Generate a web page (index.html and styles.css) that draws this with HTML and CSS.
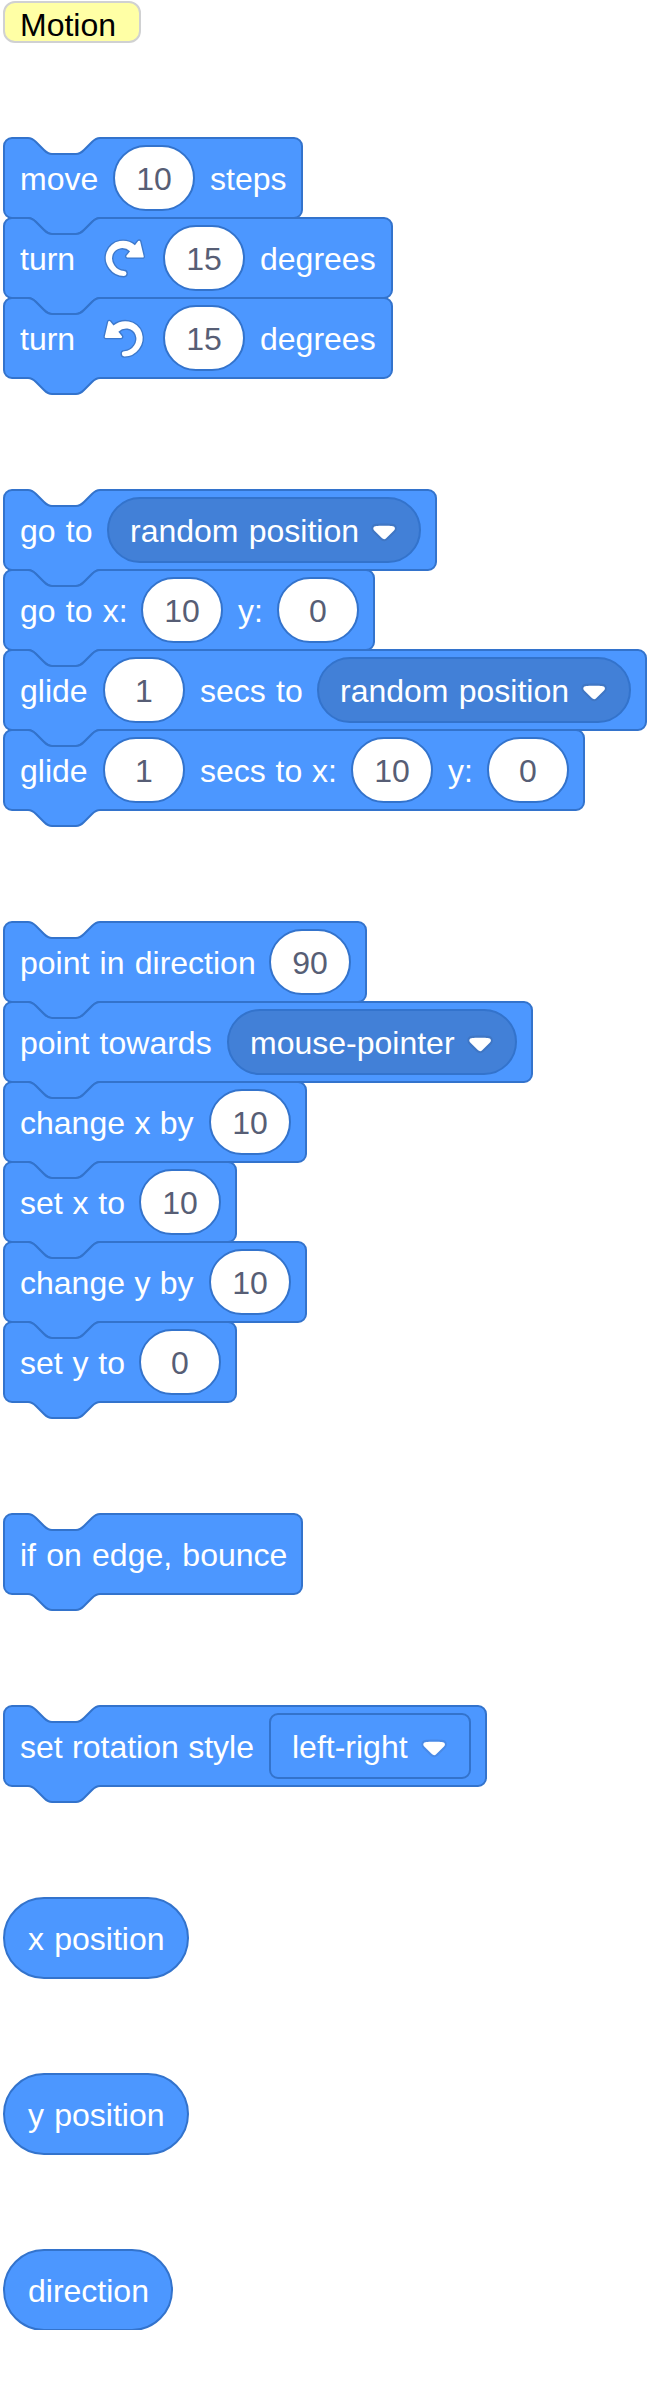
FILE: index.html
```html
<!DOCTYPE html>
<html lang="en">
<head>
<meta charset="utf-8">
<title>Motion blocks</title>
<link rel="stylesheet" href="styles.css">
</head>
<body>
<svg class="defs" aria-hidden="true">
  <symbol id="turn-right" viewBox="0 0 24 24">
    <path transform="translate(.25 .15) scale(.98)" fill="#fff" stroke="#3d79cc" stroke-width="1.4" stroke-linejoin="round" paint-order="stroke" d="M21.38 11.83h-7.61a.59.59 0 0 1-.43-1l1.75-2.19a5.9 5.9 0 0 0-4.7-1.58 5.07 5.07 0 0 0-4.11 3.17A6 6 0 0 0 7 15.77a6.51 6.51 0 0 0 5 2.92 1.31 1.31 0 0 1-.08 2.62 9.3 9.3 0 0 1-7.35-3.82 9.16 9.16 0 0 1-1.4-8.37A8.51 8.51 0 0 1 5.71 5.4a8.76 8.76 0 0 1 4.11-1.92 9.71 9.71 0 0 1 7.75 2.07l1.67-2.1a.59.59 0 0 1 1 .21L22 11.08a.59.59 0 0 1-.62.75z"/>
  </symbol>
  <symbol id="arrow" viewBox="0 0 13.5 9.5">
    <g transform="translate(.2 .3)">
      <path fill="#231f20" opacity=".1" d="M12.71 2.44A2.41 2.41 0 0 1 12 4.16L8.08 8.08a2.45 2.45 0 0 1-3.45 0L.72 4.16A2.42 2.42 0 0 1 0 2.44 2.48 2.48 0 0 1 .71.71C1 .47 1.43 0 6.36 0S11.75.46 12 .71a2.44 2.44 0 0 1 .71 1.73z"/>
      <path fill="#fff" d="M6.36 7.79a1.43 1.43 0 0 1-1-.42L1.42 3.45a1.44 1.44 0 0 1 0-2c.56-.56 9.31-.56 9.87 0a1.44 1.44 0 0 1 0 2L7.37 7.37a1.43 1.43 0 0 1-1.01.42z"/>
    </g>
  </symbol>
</svg>
<main class="palette">
  <div class="comment">Motion</div>

  <section class="stack">
    <div class="block">
      <svg class="shape"><path d="M0 8A8 8 0 0 1 8 0H24c4 0 6 2 8 4l8 8c2 2 4 4 8 4h24c4 0 6-2 8-4l8-8c2-2 4-4 8-4H290a8 8 0 0 1 8 8V72a8 8 0 0 1-8 8H96c-4 0-6 2-8 4l-8 8c-2 2-4 4-8 4H48c-4 0-6-2-8-4l-8-8c-2-2-4-4-8-4H8a8 8 0 0 1-8-8z"/></svg>
      <span class="label" style="width:78px">move</span><span class="number">10</span><span class="label" style="width:76px">steps</span>
    </div>
    <div class="block">
      <svg class="shape"><path d="M0 8A8 8 0 0 1 8 0H24c4 0 6 2 8 4l8 8c2 2 4 4 8 4h24c4 0 6-2 8-4l8-8c2-2 4-4 8-4H380a8 8 0 0 1 8 8V72a8 8 0 0 1-8 8H96c-4 0-6 2-8 4l-8 8c-2 2-4 4-8 4H48c-4 0-6-2-8-4l-8-8c-2-2-4-4-8-4H8a8 8 0 0 1-8-8z"/></svg>
      <span class="label" style="width:64px">turn</span><svg class="turn"><use href="#turn-right"/></svg><span class="number">15</span><span class="label" style="width:116px">degrees</span>
    </div>
    <div class="block">
      <svg class="shape"><path d="M0 8A8 8 0 0 1 8 0H24c4 0 6 2 8 4l8 8c2 2 4 4 8 4h24c4 0 6-2 8-4l8-8c2-2 4-4 8-4H380a8 8 0 0 1 8 8V72a8 8 0 0 1-8 8H96c-4 0-6 2-8 4l-8 8c-2 2-4 4-8 4H48c-4 0-6-2-8-4l-8-8c-2-2-4-4-8-4H8a8 8 0 0 1-8-8z"/></svg>
      <span class="label" style="width:64px">turn</span><svg class="turn" viewBox="0 0 24 24"><use href="#turn-right" width="24" height="24" transform="translate(24.2 .2) scale(-1 1)"/></svg><span class="number">15</span><span class="label" style="width:116px">degrees</span>
    </div>
  </section>

  <section class="stack">
    <div class="block">
      <svg class="shape"><path d="M0 8A8 8 0 0 1 8 0H24c4 0 6 2 8 4l8 8c2 2 4 4 8 4h24c4 0 6-2 8-4l8-8c2-2 4-4 8-4H424a8 8 0 0 1 8 8V72a8 8 0 0 1-8 8H96c-4 0-6 2-8 4l-8 8c-2 2-4 4-8 4H48c-4 0-6-2-8-4l-8-8c-2-2-4-4-8-4H8a8 8 0 0 1-8-8z"/></svg>
      <span class="label" style="width:72px">go to</span><span class="menu round"><span class="label" style="width:228px">random position</span><svg class="arrow"><use href="#arrow"/></svg></span>
    </div>
    <div class="block">
      <svg class="shape"><path d="M0 8A8 8 0 0 1 8 0H24c4 0 6 2 8 4l8 8c2 2 4 4 8 4h24c4 0 6-2 8-4l8-8c2-2 4-4 8-4H362a8 8 0 0 1 8 8V72a8 8 0 0 1-8 8H96c-4 0-6 2-8 4l-8 8c-2 2-4 4-8 4H48c-4 0-6-2-8-4l-8-8c-2-2-4-4-8-4H8a8 8 0 0 1-8-8z"/></svg>
      <span class="label" style="width:106px">go to x:</span><span class="number">10</span><span class="label" style="width:24px">y:</span><span class="number">0</span>
    </div>
    <div class="block">
      <svg class="shape"><path d="M0 8A8 8 0 0 1 8 0H24c4 0 6 2 8 4l8 8c2 2 4 4 8 4h24c4 0 6-2 8-4l8-8c2-2 4-4 8-4H634a8 8 0 0 1 8 8V72a8 8 0 0 1-8 8H96c-4 0-6 2-8 4l-8 8c-2 2-4 4-8 4H48c-4 0-6-2-8-4l-8-8c-2-2-4-4-8-4H8a8 8 0 0 1-8-8z"/></svg>
      <span class="label" style="width:68px">glide</span><span class="number">1</span><span class="label" style="width:102px">secs to</span><span class="menu round"><span class="label" style="width:228px">random position</span><svg class="arrow"><use href="#arrow"/></svg></span>
    </div>
    <div class="block">
      <svg class="shape"><path d="M0 8A8 8 0 0 1 8 0H24c4 0 6 2 8 4l8 8c2 2 4 4 8 4h24c4 0 6-2 8-4l8-8c2-2 4-4 8-4H572a8 8 0 0 1 8 8V72a8 8 0 0 1-8 8H96c-4 0-6 2-8 4l-8 8c-2 2-4 4-8 4H48c-4 0-6-2-8-4l-8-8c-2-2-4-4-8-4H8a8 8 0 0 1-8-8z"/></svg>
      <span class="label" style="width:68px">glide</span><span class="number">1</span><span class="label snug" style="width:136px">secs to x:</span><span class="number">10</span><span class="label" style="width:24px">y:</span><span class="number">0</span>
    </div>
  </section>

  <section class="stack">
    <div class="block">
      <svg class="shape"><path d="M0 8A8 8 0 0 1 8 0H24c4 0 6 2 8 4l8 8c2 2 4 4 8 4h24c4 0 6-2 8-4l8-8c2-2 4-4 8-4H354a8 8 0 0 1 8 8V72a8 8 0 0 1-8 8H96c-4 0-6 2-8 4l-8 8c-2 2-4 4-8 4H48c-4 0-6-2-8-4l-8-8c-2-2-4-4-8-4H8a8 8 0 0 1-8-8z"/></svg>
      <span class="label" style="width:234px">point in direction</span><span class="number">90</span>
    </div>
    <div class="block">
      <svg class="shape"><path d="M0 8A8 8 0 0 1 8 0H24c4 0 6 2 8 4l8 8c2 2 4 4 8 4h24c4 0 6-2 8-4l8-8c2-2 4-4 8-4H520a8 8 0 0 1 8 8V72a8 8 0 0 1-8 8H96c-4 0-6 2-8 4l-8 8c-2 2-4 4-8 4H48c-4 0-6-2-8-4l-8-8c-2-2-4-4-8-4H8a8 8 0 0 1-8-8z"/></svg>
      <span class="label" style="width:192px">point towards</span><span class="menu round"><span class="label" style="width:204px">mouse-pointer</span><svg class="arrow"><use href="#arrow"/></svg></span>
    </div>
    <div class="block">
      <svg class="shape"><path d="M0 8A8 8 0 0 1 8 0H24c4 0 6 2 8 4l8 8c2 2 4 4 8 4h24c4 0 6-2 8-4l8-8c2-2 4-4 8-4H294a8 8 0 0 1 8 8V72a8 8 0 0 1-8 8H96c-4 0-6 2-8 4l-8 8c-2 2-4 4-8 4H48c-4 0-6-2-8-4l-8-8c-2-2-4-4-8-4H8a8 8 0 0 1-8-8z"/></svg>
      <span class="label tight" style="width:174px">change x by</span><span class="number">10</span>
    </div>
    <div class="block">
      <svg class="shape"><path d="M0 8A8 8 0 0 1 8 0H24c4 0 6 2 8 4l8 8c2 2 4 4 8 4h24c4 0 6-2 8-4l8-8c2-2 4-4 8-4H224a8 8 0 0 1 8 8V72a8 8 0 0 1-8 8H96c-4 0-6 2-8 4l-8 8c-2 2-4 4-8 4H48c-4 0-6-2-8-4l-8-8c-2-2-4-4-8-4H8a8 8 0 0 1-8-8z"/></svg>
      <span class="label snug" style="width:104px">set x to</span><span class="number">10</span>
    </div>
    <div class="block">
      <svg class="shape"><path d="M0 8A8 8 0 0 1 8 0H24c4 0 6 2 8 4l8 8c2 2 4 4 8 4h24c4 0 6-2 8-4l8-8c2-2 4-4 8-4H294a8 8 0 0 1 8 8V72a8 8 0 0 1-8 8H96c-4 0-6 2-8 4l-8 8c-2 2-4 4-8 4H48c-4 0-6-2-8-4l-8-8c-2-2-4-4-8-4H8a8 8 0 0 1-8-8z"/></svg>
      <span class="label tight" style="width:174px">change y by</span><span class="number">10</span>
    </div>
    <div class="block">
      <svg class="shape"><path d="M0 8A8 8 0 0 1 8 0H24c4 0 6 2 8 4l8 8c2 2 4 4 8 4h24c4 0 6-2 8-4l8-8c2-2 4-4 8-4H224a8 8 0 0 1 8 8V72a8 8 0 0 1-8 8H96c-4 0-6 2-8 4l-8 8c-2 2-4 4-8 4H48c-4 0-6-2-8-4l-8-8c-2-2-4-4-8-4H8a8 8 0 0 1-8-8z"/></svg>
      <span class="label snug" style="width:104px">set y to</span><span class="number">0</span>
    </div>
  </section>

  <section class="stack">
    <div class="block">
      <svg class="shape"><path d="M0 8A8 8 0 0 1 8 0H24c4 0 6 2 8 4l8 8c2 2 4 4 8 4h24c4 0 6-2 8-4l8-8c2-2 4-4 8-4H290a8 8 0 0 1 8 8V72a8 8 0 0 1-8 8H96c-4 0-6 2-8 4l-8 8c-2 2-4 4-8 4H48c-4 0-6-2-8-4l-8-8c-2-2-4-4-8-4H8a8 8 0 0 1-8-8z"/></svg>
      <span class="label" style="width:266px">if on edge, bounce</span>
    </div>
  </section>

  <section class="stack">
    <div class="block">
      <svg class="shape"><path d="M0 8A8 8 0 0 1 8 0H24c4 0 6 2 8 4l8 8c2 2 4 4 8 4h24c4 0 6-2 8-4l8-8c2-2 4-4 8-4H474a8 8 0 0 1 8 8V72a8 8 0 0 1-8 8H96c-4 0-6 2-8 4l-8 8c-2 2-4 4-8 4H48c-4 0-6-2-8-4l-8-8c-2-2-4-4-8-4H8a8 8 0 0 1-8-8z"/></svg>
      <span class="label tight" style="width:234px">set rotation style</span><span class="menu square"><span class="label" style="width:116px">left-right</span><svg class="arrow"><use href="#arrow"/></svg></span>
    </div>
  </section>

  <div class="reporter"><span class="label" style="width:136px">x position</span></div>
  <div class="reporter"><span class="label" style="width:136px">y position</span></div>
  <div class="reporter"><span class="label" style="width:120px">direction</span></div>
</main>
</body>
</html>
```
FILE: styles.css
```css
* { box-sizing: border-box; }

body {
  margin: 0;
  background: #fff;
  font: 32px/36px "Liberation Sans", Arial, sans-serif;
  word-spacing: 1.33px;
}

.defs { display: none; }

.palette {
  display: flex;
  flex-direction: column;
  align-items: flex-start;
  gap: 96px;
  padding: 2px 4px 0;
}

.comment {
  width: 138px;
  height: 42px;
  margin: -1px;
  padding: 4px 0 0 15px;
  border: 2px solid #d0d1d2;
  border-radius: 12px;
  background: #ffffa5;
  color: #000;
}

.stack {
  display: flex;
  flex-direction: column;
  align-items: flex-start;
  padding-bottom: 16px;
}

.block {
  position: relative;
  display: flex;
  align-items: center;
  gap: 16px;
  height: 80px;
  padding: 0 16px;
}

.shape {
  position: absolute;
  left: 0;
  top: 0;
  width: 100%;
  height: 100%;
  overflow: visible;
  fill: #4c97ff;
  stroke: #3373cc;
  stroke-width: 2;
}

.block > :not(.shape) { position: relative; }

.label {
  flex: none;
  padding-top: 2px;
  color: #fff;
  white-space: nowrap;
}

.tight { word-spacing: .5px; }

.snug { word-spacing: .9px; }

.number {
  width: 82px;
  height: 66px;
  margin: 0 -1px;
  padding-top: 14px;
  border: 2px solid #3373cc;
  border-radius: 33px;
  background: #fff;
  color: #575e75;
  text-align: center;
}

.menu {
  display: flex;
  align-items: center;
  gap: 13px;
  height: 66px;
  margin: 0 -1px;
  padding: 0 21px;
  border: 2px solid #3373cc;
}

.round {
  border-radius: 33px;
  background: #4280d7;
}

.square { border-radius: 9px; }

.arrow {
  flex: none;
  width: 27px;
  height: 19px;
  margin-top: 5px;
}

.turn {
  flex: none;
  width: 48px;
  height: 48px;
}

.reporter {
  display: flex;
  align-items: center;
  height: 82px;
  margin: -1px;
  padding: 0 23px;
  border: 2px solid #3373cc;
  border-radius: 41px;
  background: #4c97ff;
}
```
